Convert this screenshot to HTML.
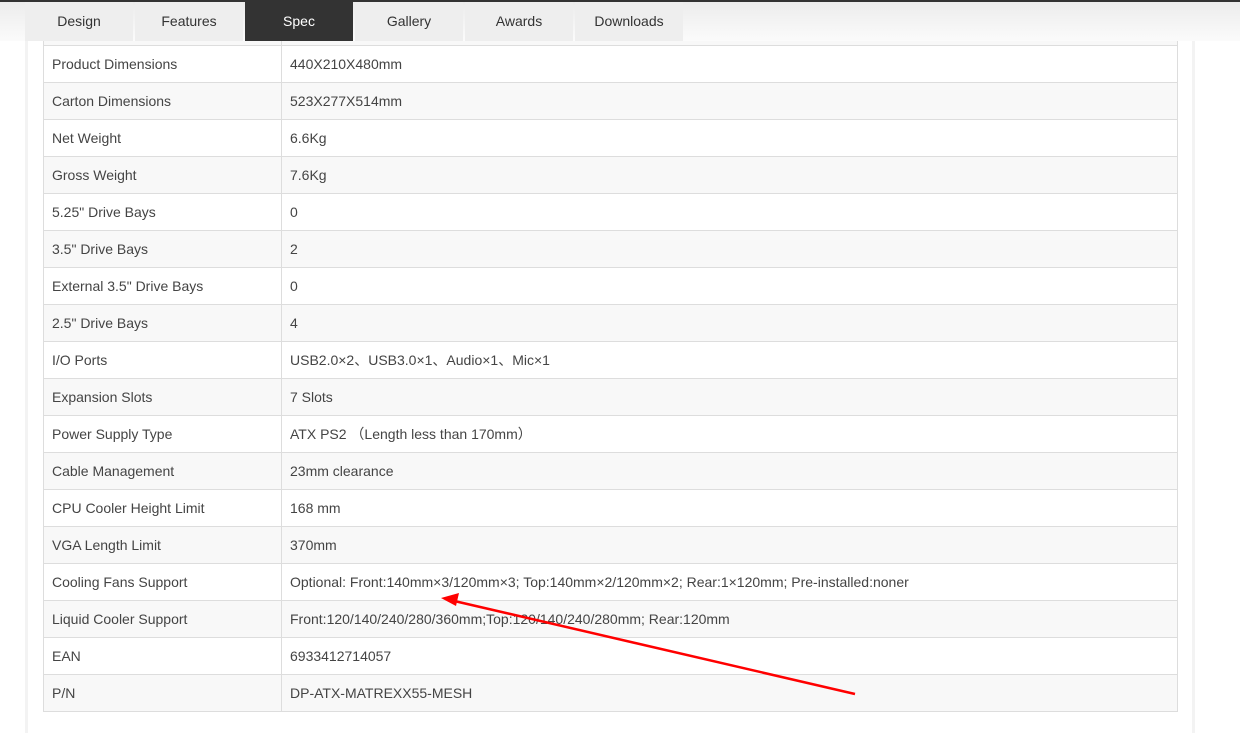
<!DOCTYPE html>
<html><head><meta charset="utf-8"><style>
*{margin:0;padding:0;box-sizing:border-box}
body{width:1240px;height:733px;overflow:hidden;background:#fff;font-family:"Liberation Sans","Noto Sans CJK SC",sans-serif;position:relative}
.top{position:absolute;left:0;top:0;width:1240px;height:2px;background:#333}
.hdr{position:absolute;left:0;top:2px;width:1240px;height:39px;background:linear-gradient(#ececec,#fbfbfb)}
.tab{position:absolute;top:2px;height:39px;width:108px;background:#eee;color:#333;font-size:14px;text-align:center;line-height:38px}
.tab.on{background:#333;color:#fff}
.sl{position:absolute;left:25px;top:41px;width:3px;height:692px;background:#f3f3f3}
.sr{position:absolute;left:1192px;top:41px;width:3px;height:692px;background:#f3f3f3}
table{position:absolute;left:43px;top:8px;width:1135px;border-collapse:collapse;font-size:14px;color:#444}
td{border:1px solid #ddd;height:37px;padding:0 8px;vertical-align:middle}
td:first-child{width:238px}
tr:nth-child(odd) td{background:#f8f8f8}
.wrap{position:absolute;left:0;top:41px;width:1240px;height:692px;overflow:hidden}
</style></head><body>
<div class="top"></div><div class="hdr"></div>
<div class="tab" style="left:25px">Design</div>
<div class="tab" style="left:135px">Features</div>
<div class="tab on" style="left:245px">Spec</div>
<div class="tab" style="left:355px">Gallery</div>
<div class="tab" style="left:465px">Awards</div>
<div class="tab" style="left:575px">Downloads</div>
<div class="sl"></div><div class="sr"></div>
<div class="wrap"><table style="top:-33px">
<tr><td>Model</td><td>MATREXX 55 MESH</td></tr>
<tr><td>Product Dimensions</td><td>440X210X480mm</td></tr>
<tr><td>Carton Dimensions</td><td>523X277X514mm</td></tr>
<tr><td>Net Weight</td><td>6.6Kg</td></tr>
<tr><td>Gross Weight</td><td>7.6Kg</td></tr>
<tr><td>5.25" Drive Bays</td><td>0</td></tr>
<tr><td>3.5" Drive Bays</td><td>2</td></tr>
<tr><td>External 3.5" Drive Bays</td><td>0</td></tr>
<tr><td>2.5" Drive Bays</td><td>4</td></tr>
<tr><td>I/O Ports</td><td>USB2.0×2、USB3.0×1、Audio×1、Mic×1</td></tr>
<tr><td>Expansion Slots</td><td>7 Slots</td></tr>
<tr><td>Power Supply Type</td><td>ATX PS2 （Length less than 170mm）</td></tr>
<tr><td>Cable Management</td><td>23mm clearance</td></tr>
<tr><td>CPU Cooler Height Limit</td><td>168 mm</td></tr>
<tr><td>VGA Length Limit</td><td>370mm</td></tr>
<tr><td>Cooling Fans Support</td><td>Optional: Front:140mm×3/120mm×3; Top:140mm×2/120mm×2; Rear:1×120mm; Pre-installed:noner</td></tr>
<tr><td>Liquid Cooler Support</td><td>Front:120/140/240/280/360mm;Top:120/140/240/280mm; Rear:120mm</td></tr>
<tr><td>EAN</td><td>6933412714057</td></tr>
<tr><td>P/N</td><td>DP-ATX-MATREXX55-MESH</td></tr>
</table></div>
<svg style="position:absolute;left:0;top:0" width="1240" height="733">
<line x1="855" y1="694" x2="450" y2="600" stroke="#f00" stroke-width="2.5"/>
<polygon points="441,598 459,593 456,606" fill="#f00"/>
</svg>
</body></html>
